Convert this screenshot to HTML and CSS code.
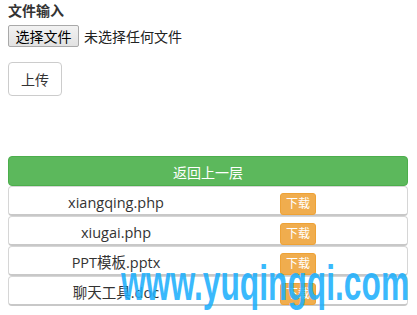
FILE: index.html
```html
<!DOCTYPE html>
<html lang="zh-CN">
<head>
    <meta charset="UTF-8">
    <meta name="viewport" content="width=device-width, initial-scale=1.0">
    <title>文件管理</title>
    <link rel="stylesheet" href="styles.css">
</head>
<body>
    <div class="page">
        <form class="upload-form">
            <label class="field-label">文件输入</label>
            <div class="file-input">
                <button type="button" class="file-btn">选择文件</button>
                <span class="file-status">未选择任何文件</span>
            </div>
            <button type="button" class="btn btn-default">上传</button>
        </form>

        <div class="file-list">
            <a class="btn-back">返回上一层</a>
            <div class="file-row">
                <span class="file-name">xiangqing.php</span>
                <a class="btn-download">下载</a>
            </div>
            <div class="file-row">
                <span class="file-name">xiugai.php</span>
                <a class="btn-download">下载</a>
            </div>
            <div class="file-row">
                <span class="file-name">PPT模板.pptx</span>
                <a class="btn-download">下载</a>
            </div>
            <div class="file-row">
                <span class="file-name">聊天工具.doc</span>
                <a class="btn-download">下载</a>
            </div>
        </div>

        <div class="watermark">www.yuqingqi.com</div>
    </div>
</body>
</html>
```

FILE: styles.css
```css
* {
    margin: 0;
    padding: 0;
    box-sizing: border-box;
}

body {
    font-family: 'Open Sans', 'Noto Sans CJK SC', sans-serif;
    font-size: 14px;
    color: #333;
    background: #fff;
}

.page {
    position: relative;
    padding: 1px 8px 0;
    height: 315px;
    overflow: hidden;
}

.upload-form {
    display: flex;
    flex-direction: column;
    align-items: flex-start;
}

.field-label {
    font-weight: bold;
    line-height: 20px;
    margin-bottom: 4px;
}

.file-input {
    display: flex;
    align-items: center;
    height: 22px;
}

.file-btn {
    font-family: 'Noto Sans CJK SC', sans-serif;
    font-size: 14px;
    color: #000;
    height: 22px;
    width: 71px;
    line-height: 18px;
    background: linear-gradient(#f2f2f2, #e2e2e2);
    border: 1px solid #a9a9a9;
    border-radius: 2px;
}

.file-status {
    margin-left: 5px;
    font-family: 'Noto Sans CJK SC', sans-serif;
    color: #222;
}

.btn {
    margin-top: 15px;
    height: 34px;
    width: 54px;
    padding: 6px 12px;
    font-family: 'Noto Sans CJK SC', sans-serif;
    font-size: 14px;
    line-height: 20px;
    border-radius: 4px;
}

.btn-default {
    background: #fff;
    color: #333;
    border: 1px solid #ccc;
}

.file-list {
    margin-top: 60px;
    width: 400px;
}

.btn-back {
    display: block;
    height: 30px;
    padding: 7px 0 3px;
    line-height: 18px;
    text-align: center;
    color: #fff;
    background: #5cb85c;
    border: 1px solid #4cae4c;
    border-radius: 4px;
}

.file-row {
    display: flex;
    align-items: flex-end;
    height: 30px;
    border: 1px solid #d6d6d6;
    border-bottom: 2px solid #c8c8c8;
    border-radius: 4px;
}

.file-name {
    width: 214px;
    line-height: 22px;
    font-size: 14.5px;
    text-align: center;
    color: #333;
}

.btn-download {
    margin-left: 57px;
    width: 36px;
    height: 22px;
    line-height: 20px;
    font-size: 12px;
    text-align: center;
    color: #fff;
    background: #f0ad4e;
    border: 1px solid #eea236;
    border-radius: 3px;
    margin-bottom: -1px;
}

/* site watermark laid over the list */
.watermark {
    position: absolute;
    left: 121px;
    top: 253px;
    font-family: 'Liberation Sans', sans-serif;
    font-weight: bold;
    font-size: 50px;
    line-height: 60px;
    color: rgba(30, 175, 252, 0.88);
    white-space: nowrap;
    transform: scaleX(0.635);
    transform-origin: left top;
}
```
